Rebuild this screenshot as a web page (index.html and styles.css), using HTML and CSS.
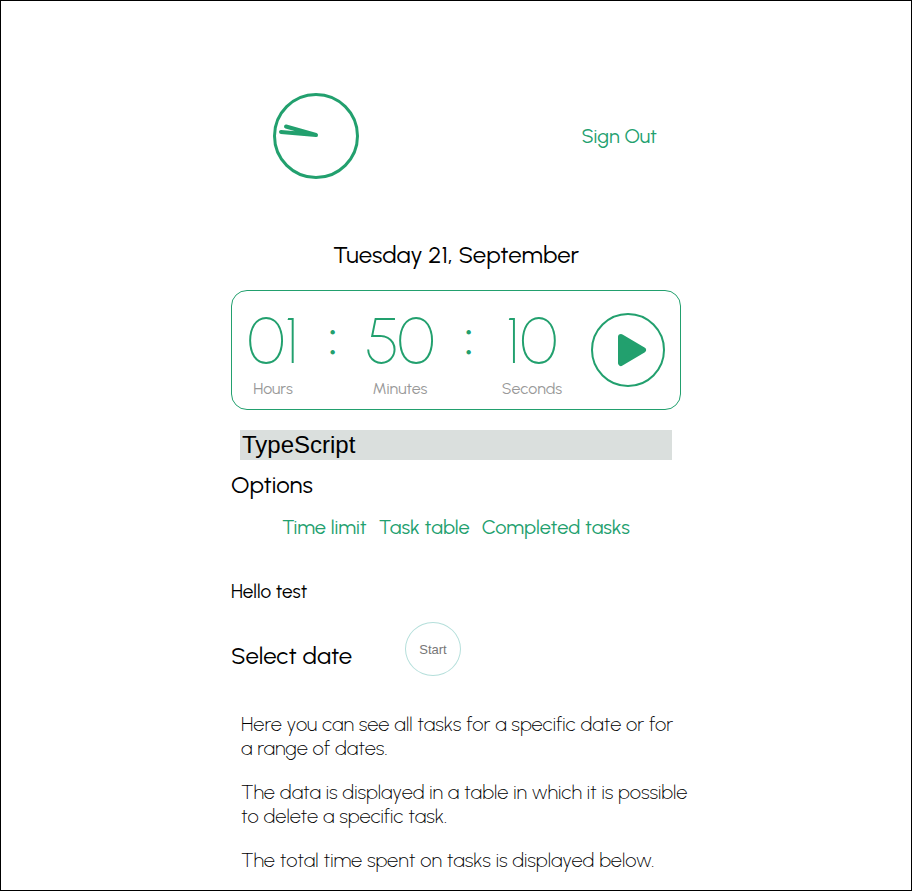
FILE: index.html
```html
<!DOCTYPE html>
<html lang="en">
<head>
<meta charset="utf-8">
<meta name="viewport" content="width=device-width, initial-scale=1">
<title>Task timer</title>
<link rel="stylesheet" href="styles.css">
</head>
<body>
<div class="page">
  <header class="header">
    <svg class="clock" viewBox="0 0 86 86" aria-hidden="true">
      <circle cx="43" cy="43" r="41.5" fill="none" stroke="currentColor" stroke-width="3"/>
      <path d="M43 42 13 33.5M43 42 8 39" fill="none" stroke="currentColor" stroke-width="4" stroke-linecap="round"/>
    </svg>
    <a class="link" href="#">Sign Out</a>
  </header>
  <main class="main">
    <h1 class="date">Tuesday 21, September</h1>
    <section class="timer">
      <div class="unit"><span class="digits">01</span><span class="label">Hours</span></div>
      <span class="colon">:</span>
      <div class="unit"><span class="digits">50</span><span class="label">Minutes</span></div>
      <span class="colon">:</span>
      <div class="unit"><span class="digits">10</span><span class="label">Seconds</span></div>
      <button class="play" type="button" aria-label="Play">
        <svg viewBox="0 0 70 70" aria-hidden="true"><path d="M28 22 50 35 28 48Z" fill="currentColor" stroke="currentColor" stroke-width="6" stroke-linejoin="round"/></svg>
      </button>
    </section>
    <input class="task" type="text" value="TypeScript" aria-label="Task">
    <h2 class="title">Options</h2>
    <nav class="options">
      <a class="link" href="#">Time limit</a>
      <a class="link" href="#">Task table</a>
      <a class="link" href="#">Completed tasks</a>
    </nav>
    <p class="note">Hello test</p>
    <div class="select">
      <h2 class="title">Select date</h2>
      <button class="start" type="button">Start</button>
    </div>
    <div class="help">
      <p>Here you can see all tasks for a specific date or for a range of dates.</p>
      <p>The data is displayed in a table in which it is possible to delete a specific task.</p>
      <p>The total time spent on tasks is displayed below.</p>
    </div>
  </main>
</div>
</body>
</html>
```
FILE: styles.css
```css
* { box-sizing: border-box; }
body {
  margin: 0;
  background: #fff;
  color: #000;
  font-family: Urbanist, Lato, sans-serif;
}
.page {
  border: 1px solid #000;
  padding: 92px 20px 18px;
}
.header, .main {
  max-width: 450px;
  margin: 0 auto;
}
.header {
  display: flex;
  align-items: center;
  justify-content: space-between;
  padding: 0 24px 0 42px;
}
.clock { width: 86px; height: 86px; color: #22a06e; }
.link {
  color: #22a06e;
  font-size: 20px;
  line-height: 24px;
  text-decoration: none;
}
.date, .title {
  margin: 0;
  font-size: 24px;
  line-height: 30px;
  font-weight: 400;
}
.date { margin: 61px 0 20px; text-align: center; }
.timer {
  display: grid;
  grid-template-columns: 82px 38px 96px 42px 84px 1fr;
  height: 120px;
  border: 1px solid #22a06e;
  border-radius: 16px;
  color: #22a06e;
}
.unit {
  display: flex;
  flex-direction: column;
  align-items: center;
  padding-top: 18px;
}
.digits { font-size: 64px; line-height: 64px; font-weight: 100; }
.label {
  margin-top: 5px;
  color: #999;
  font-size: 16px;
  line-height: 22px;
}
.colon {
  padding-top: 14px;
  font-size: 48px;
  line-height: 64px;
  font-weight: 500;
  text-align: center;
}
.play {
  align-self: center;
  justify-self: end;
  width: 74px;
  height: 74px;
  margin-right: 15px;
  padding: 0;
  border: 2px solid #22a06e;
  border-radius: 50%;
  background: none;
  color: #22a06e;
}
.play svg { display: block; width: 100%; }
.task {
  display: block;
  width: 96%;
  height: 30px;
  margin: 20px auto 10px;
  padding: 0 2px;
  border: 0;
  background: #dadfdd;
  font: 24px "Liberation Sans", sans-serif;
}
.options {
  display: flex;
  justify-content: center;
  gap: 12px;
  margin: 15px 0 41px;
}
.note { margin: 0 0 18px; font-size: 19px; line-height: 24px; }
.select { display: flex; align-items: center; }
.select .title { flex: 0 0 174px; padding-top: 14px; }
.start {
  width: 56px;
  height: 54px;
  padding: 0;
  border: 1px solid #b5dfdb;
  border-radius: 50%;
  background: none;
  color: #777;
  font: 13px "Liberation Sans", sans-serif;
}
.help {
  margin-right: -8px;
  padding: 16px 0 0 10px;
  color: #000;
  font-size: 20px;
  line-height: 24px;
  font-weight: 200;
}
.help p { margin: 20px 0 0; }
```
